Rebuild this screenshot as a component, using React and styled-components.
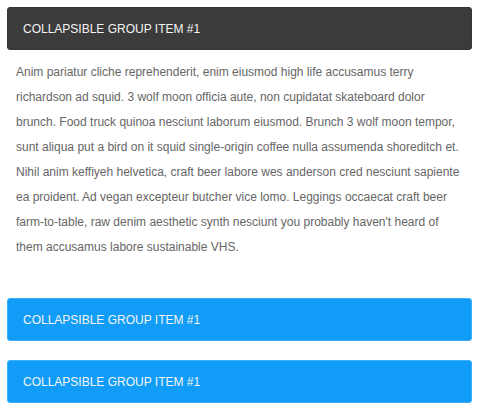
import React from 'react';
import styled, { createGlobalStyle } from 'styled-components';

const GlobalStyle = createGlobalStyle`
  body {
    margin: 0;
    background: #fff;
    font-family: "Liberation Sans", Arial, sans-serif;
  }
`;

const Accordion = styled.div`
  padding: 7px 8px 7px 7px;
  display: flex;
  flex-direction: column;
`;

const Group = styled.div`
  margin-bottom: 19px;
`;

const Header = styled.div`
  height: 43px;
  display: flex;
  align-items: center;
  padding: 0 15px;
  border-radius: 3px;
  border: 1px solid ${(p) => (p.$open ? '#353535' : '#3aaef8')};
  background: ${(p) => (p.$open ? '#3b3b3b' : '#119df7')};
  color: #f4f4f4;
  font-size: 12px;
  text-transform: uppercase;
  box-sizing: border-box;
`;

const Body = styled.div`
  padding: 10px 9px 19px 9px;
  font-size: 12px;
  line-height: 25px;
  color: #666;
`;

const text =
  "Anim pariatur cliche reprehenderit, enim eiusmod high life accusamus terry richardson ad squid. 3 wolf moon officia aute, non cupidatat skateboard dolor brunch. Food truck quinoa nesciunt laborum eiusmod. Brunch 3 wolf moon tempor, sunt aliqua put a bird on it squid single-origin coffee nulla assumenda shoreditch et. Nihil anim keffiyeh helvetica, craft beer labore wes anderson cred nesciunt sapiente ea proident. Ad vegan excepteur butcher vice lomo. Leggings occaecat craft beer farm-to-table, raw denim aesthetic synth nesciunt you probably haven't heard of them accusamus labore sustainable VHS.";

const groups = [
  { title: 'Collapsible Group Item #1', open: true },
  { title: 'Collapsible Group Item #1', open: false },
  { title: 'Collapsible Group Item #1', open: false },
];

export default function App() {
  return (
    <>
      <GlobalStyle />
      <Accordion>
        {groups.map((g, i) => (
          <Group key={i}>
            <Header $open={g.open}>{g.title}</Header>
            {g.open && <Body>{text}</Body>}
          </Group>
        ))}
      </Accordion>
    </>
  );
}
